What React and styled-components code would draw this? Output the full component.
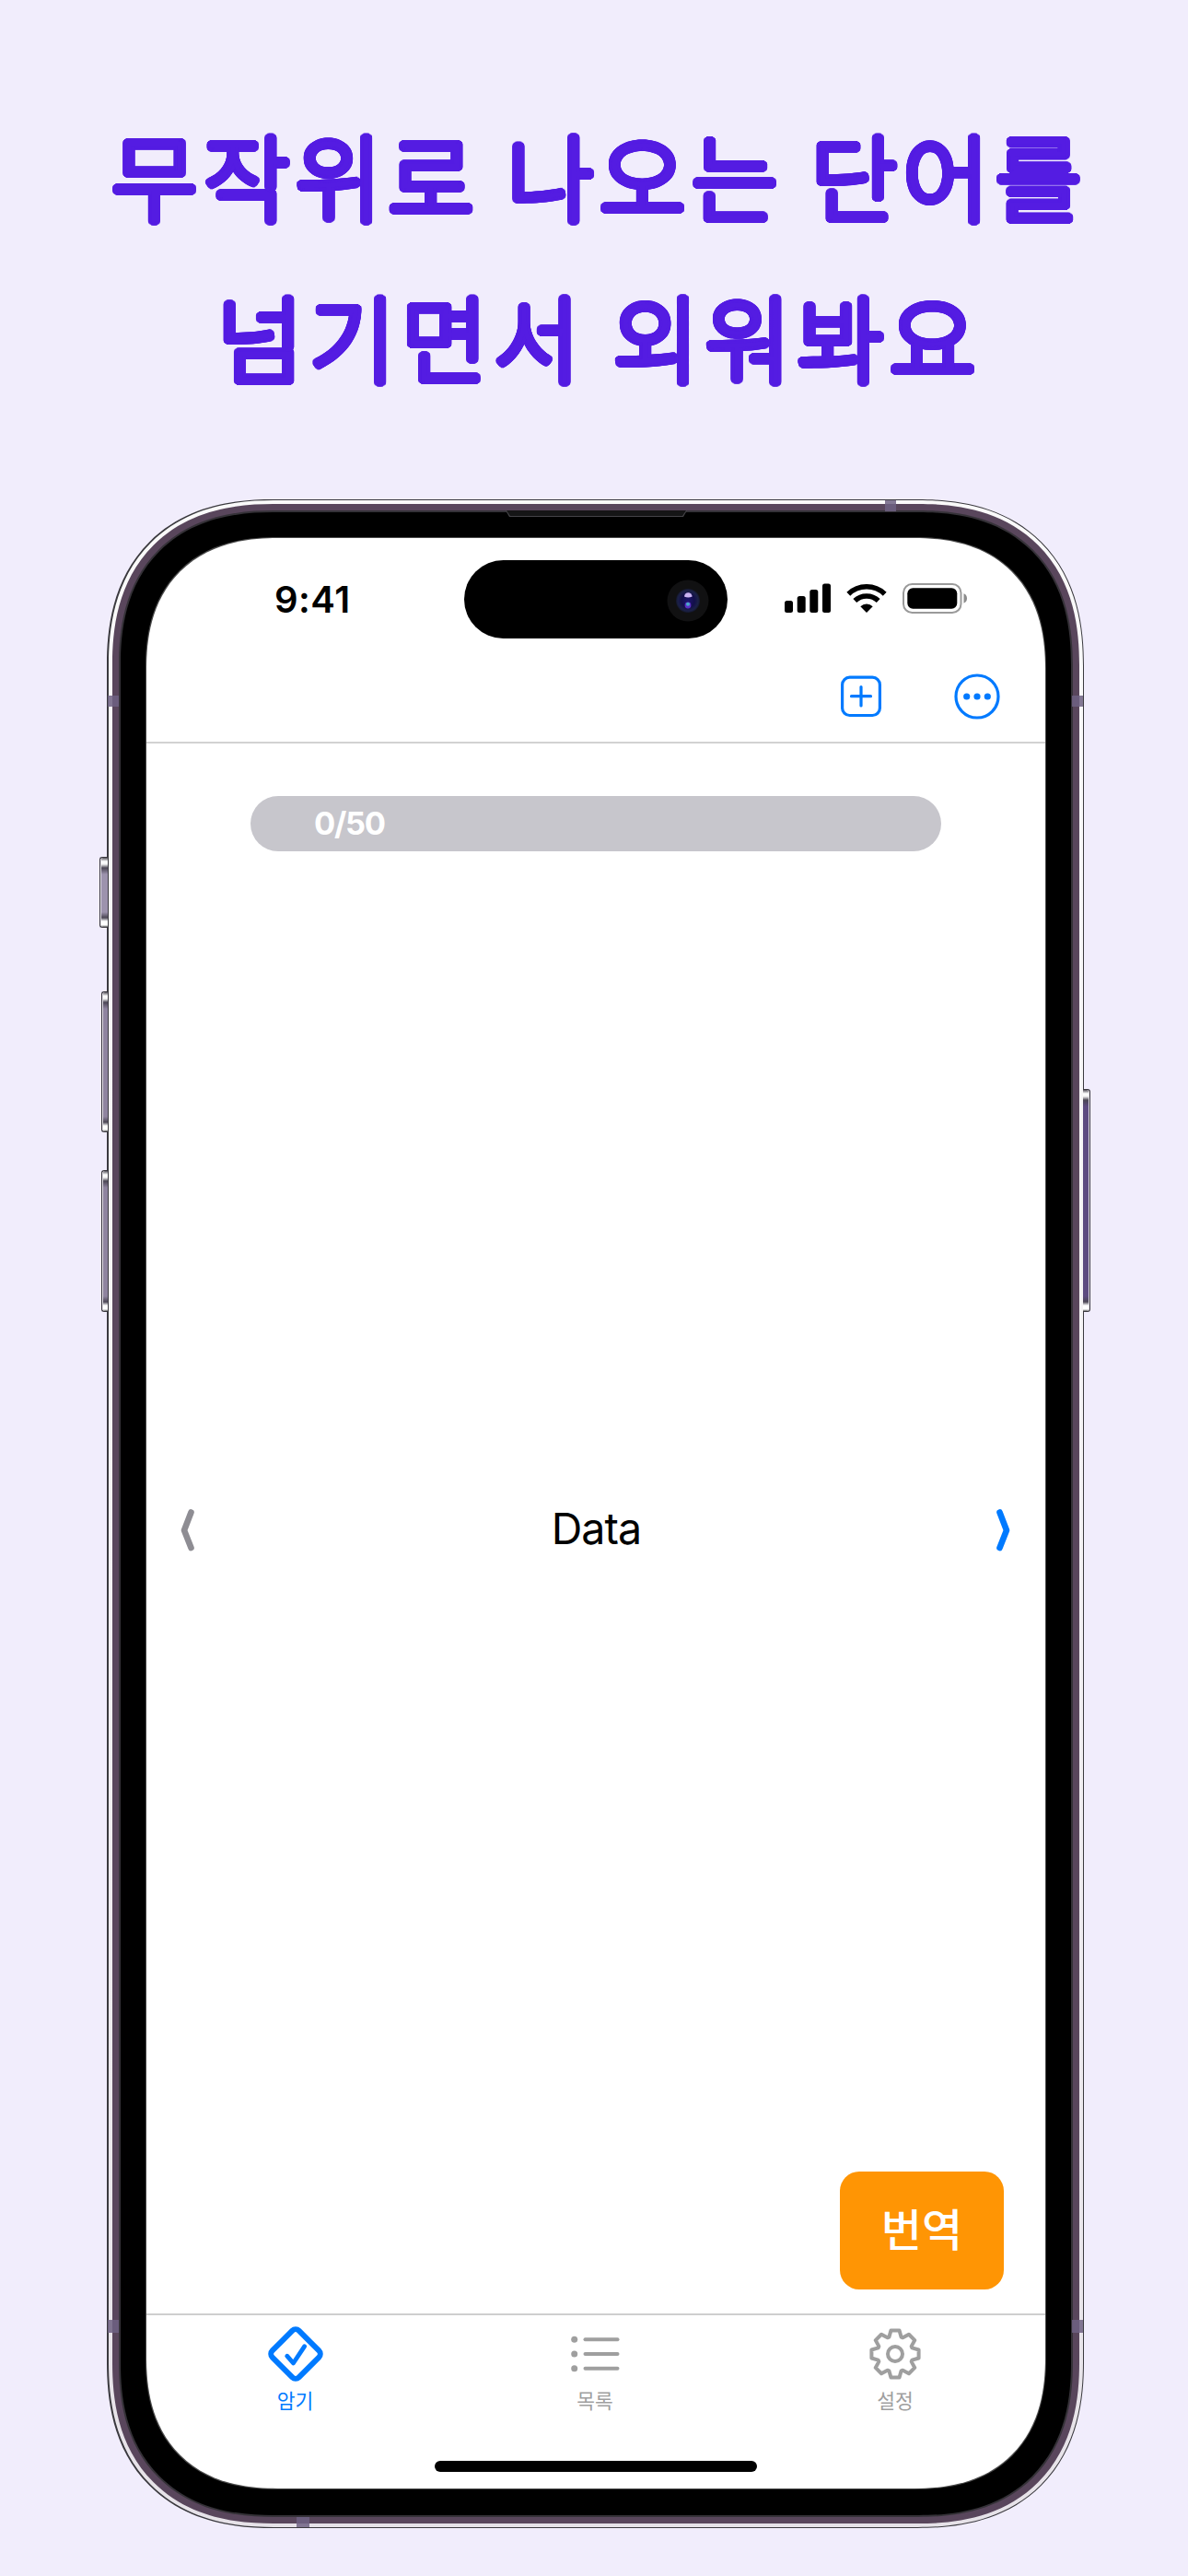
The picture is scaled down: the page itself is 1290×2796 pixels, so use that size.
import React from "react";
import styled, { createGlobalStyle, css } from "styled-components";

const BLUE = "#007aff";
const GRAY = "#8e8d93";
const TAB_GRAY = "#9f9f9f";
const VIOLET = "#541ce2";

const GlobalStyle = createGlobalStyle`
  * { box-sizing: border-box; }
  body { margin: 0; background: #f1edfc; }
  svg { display: block; flex: none; }
`;

const smooth = (r) => css`
  border-radius: ${r}px;
  @supports (corner-shape: superellipse(1.23)) {
    border-radius: ${r * 1.15}px;
    corner-shape: superellipse(1.23);
  }
`;

// Rings of hard shadows thicken the strokes and round off their ends.
const ring = (radius, steps) =>
  Array.from({ length: steps }, (_, i) => {
    const a = (i * 2 * Math.PI) / steps;
    return `${(radius * Math.cos(a)).toFixed(2)}px ${(radius * Math.sin(a)).toFixed(2)}px 0 ${VIOLET}`;
  }).join(", ");

const Page = styled.main`
  width: 1290px;
  height: 2796px;
  overflow: hidden;
  background: #f1edfc;
  font-family: Inter, "Noto Sans CJK KR", sans-serif;
`;

const Headline = styled.h1`
  margin: 0;
  padding: 101px 0 0 11px;
  height: 542px;
  text-align: center;
  font: 300 102.500px/175px "Noto Sans CJK KR", sans-serif;
  letter-spacing: 5.800px;
  word-spacing: 1px;
  color: ${VIOLET};
  text-shadow: ${ring(3.8, 28)}, ${ring(2, 12)};
`;

const Phone = styled.div`
  position: relative;
  width: 1061px;
  height: 2202px;
  margin-left: 116px;
`;

const Rim = styled.div`
  height: 100%;
  padding: 1px 1px 1px 2px;
  background: #3b3a3f;
  ${smooth(157)}
`;
const Highlight = styled.div`
  height: 100%;
  padding: 4px;
  background: linear-gradient(#fafafa, #f4f2f4 50%, #e6e2e8);
  ${smooth(156)}
`;
const Band = styled.div`
  height: 100%;
  padding: 7px;
  background: #59465c;
  ${smooth(152)}
`;
const Edge = styled.div`
  height: 100%;
  padding: 2px;
  background: #353238;
  ${smooth(146)}
`;
const Bezel = styled.div`
  height: 100%;
  padding: 28px 28px 29px;
  background: #000;
  ${smooth(144)}
`;
const Screen = styled.div`
  height: 100%;
  display: flex;
  flex-direction: column;
  background: #fff;
  overflow: hidden;
  box-shadow: 0 0 0 1px #4a4a4a;
  ${smooth(124)}
`;

const SideButton = styled.span`
  position: absolute;
  ${(p) => p.$side}: -${(p) => p.$out}px;
  top: ${(p) => p.$top}px;
  width: ${(p) => p.$out + 1}px;
  height: ${(p) => p.$h}px;
  border: 1px solid #3a383e;
  border-${(p) => (p.$side === "left" ? "right" : "left")}-width: 0;
  border-radius: ${(p) => (p.$side === "left" ? "3px 0 0 3px" : "0 3px 3px 0")};
  background: linear-gradient(
    #55515a, #fff 4px, #f4f4f4 7px, #4b4654 11px, ${(p) => p.$tone} 18px,
    ${(p) => p.$tone} calc(100% - 16px), #4b4654 calc(100% - 10px),
    #fff calc(100% - 6px), #fff calc(100% - 2px), #666);
  box-shadow: inset ${(p) => (p.$side === "left" ? 1 : -1)}px 0 0 #e4e1e8;
`;

const Antenna = styled.span`
  position: absolute;
  background: #6e6283d9;
  left: ${(p) => p.$x}px;
  top: ${(p) => p.$y}px;
  width: ${(p) => p.$w}px;
  height: ${(p) => p.$h}px;
`;

const Speaker = styled.span`
  position: absolute;
  left: 433px;
  top: 12px;
  width: 197px;
  height: 7px;
  background: #444347;
  clip-path: polygon(0 0, 100% 0, calc(100% - 4px) 100%, 4px 100%);
  &::after {
    content: "";
    display: block;
    height: 6px;
    background: #151516;
    clip-path: polygon(1px 0, calc(100% - 1px) 0, calc(100% - 5px) 100%, 5px 100%);
  }
`;

const StatusBar = styled.header`
  flex: none;
  height: 138px;
  padding: 24px 84px 0 139px;
  display: grid;
  grid-template-columns: 206px 286px 1fr;
`;
const Clock = styled.time`
  font-size: 40px;
  font-weight: 600;
  line-height: 85px;
  letter-spacing: 0.5px;
  color: #000;
`;
const Island = styled.div`
  height: 85px;
  border-radius: 43px;
  background: #000;
  display: flex;
  align-items: center;
  justify-content: flex-end;
  padding: 3px 20px 0 0;
`;
const StatusIcons = styled.div`
  display: flex;
  justify-content: flex-end;
  gap: 17px;
  padding-top: 25px;
`;

const Toolbar = styled.nav`
  flex: none;
  height: 85px;
  padding: 9px 49px 0 0;
  display: flex;
  align-items: flex-start;
  justify-content: flex-end;
  gap: 79px;
  border-bottom: 2px solid #d2d2d2;
`;

const Content = styled.section`
  flex: 1;
  display: flex;
  flex-direction: column;
  padding: 57px 38px 26px 37px;
`;
const Progress = styled.div`
  height: 60px;
  margin: 0 75px 0 76px;
  border-radius: 30px;
  background: #c7c6cc;
  padding-left: 69px;
  font-size: 34.5px;
  font-weight: 700;
  line-height: 60px;
  letter-spacing: -1.3px;
  color: #fff;
`;
const WordRow = styled.div`
  height: 60px;
  margin-top: 707px;
  display: flex;
  align-items: center;
  justify-content: space-between;
`;
const Word = styled.p`
  margin: 0;
  padding: 0 0 4px 2px;
  font-size: 46.5px;
  letter-spacing: -0.9px;
  line-height: 60px;
  color: #000;
`;
const TranslateButton = styled.button`
  width: 178px;
  height: 128px;
  margin: auto 7px 0 auto;
  padding: 0 0 8px;
  border: 0;
  border-radius: 21px;
  background: #ff9504;
  color: #fff;
  font: 500 48px/118px "Noto Sans CJK KR", sans-serif;
`;

const TabBar = styled.footer`
  flex: none;
  height: 190px;
  border-top: 2px solid #cfcfcf;
  display: grid;
  grid-template-columns: 323px 328px 1fr;
  grid-template-rows: 146px 42px;
  padding-right: 1px;
`;
const Tab = styled.div`
  display: flex;
  flex-direction: column;
  align-items: center;
  padding-top: 11px;
  color: ${(p) => (p.$active ? BLUE : TAB_GRAY)};
  font: 400 21.5px/30px "Noto Sans CJK KR", sans-serif;
  span { margin-top: 4px; }
`;
const HomeIndicator = styled.div`
  grid-column: 1 / -1;
  justify-self: center;
  width: 350px;
  height: 12px;
  margin: 12px 0 0 1px;
  border-radius: 6px;
  background: #000;
`;

const Camera = () => (
  <svg width="46" height="46" viewBox="-23 -23 46 46">
    <defs>
      <radialGradient id="lens">
        <stop offset="0" stopColor="#1d1470" />
        <stop offset="0.55" stopColor="#130f4a" />
        <stop offset="0.85" stopColor="#1b2147" />
        <stop offset="1" stopColor="#14172b" />
      </radialGradient>
    </defs>
    <circle r="22.5" fill="#111112" />
    <circle r="13" fill="url(#lens)" />
    <path d="M-4-4.5a4.3 4.3 0 0 1 8.6 0q-4.3 2-8.6 0z" fill="#c9b3f2" />
    <circle cy="5" r="3.4" fill="#5a2fc4" />
    <circle cy="3.8" r="2" fill="#49a9c8" />
  </svg>
);

const Signal = () => (
  <svg width="50" height="32" viewBox="0 0 50 32">
    <rect x="0" y="19" width="9" height="13" rx="2.5" />
    <rect x="13.7" y="14" width="9" height="18" rx="2.5" />
    <rect x="27.3" y="7" width="9" height="25" rx="2.5" />
    <rect x="41" y="0.5" width="9" height="31.5" rx="2.5" />
  </svg>
);

const Wifi = () => (
  <svg width="44" height="33" viewBox="0 0 44 33">
    <g fill="none" stroke="#000" strokeWidth="5.6">
      <path d="M2.3 11.7A28.5 28.5 0 0 1 41.7 11.7" />
      <path d="M9.3 19A18.5 18.5 0 0 1 34.7 19" />
    </g>
    <path d="M15.3 25.2a9.7 9.7 0 0 1 13.4 0L22 32z" />
  </svg>
);

const Battery = () => (
  <svg width="71" height="33" viewBox="0 0 71 33">
    <rect x="1" y="1" width="62.5" height="31" rx="9.5" fill="none" stroke="#9a9a9a" strokeWidth="2" />
    <rect x="5.3" y="5.3" width="54" height="22.4" rx="6" />
    <path d="M66.5 11.3a5.6 5.6 0 0 1 0 10.4z" fill="#8c8c8c" />
  </svg>
);

const AddIcon = () => (
  <svg width="44" height="49" viewBox="0 0 44 49" fill="none" stroke={BLUE} strokeWidth="3.2" strokeLinecap="round">
    <rect x="1.6" y="4.2" width="40.8" height="41.3" rx="8" />
    <path d="M22 14.5v20.5M11.500 24.7h21" />
  </svg>
);

const MoreIcon = () => (
  <svg width="50" height="50" viewBox="-25 -25 50 50" fill={BLUE}>
    <circle r="23" fill="none" stroke={BLUE} strokeWidth="3.2" />
    <circle cx="-11.3" r="3.6" />
    <circle r="3.6" />
    <circle cx="11.3" r="3.6" />
  </svg>
);

const Chevron = ({ color, d }) => (
  <svg width="15" height="46" viewBox="0 0 15 46" fill="none" stroke={color} strokeWidth="6.6" strokeLinecap="round" strokeLinejoin="round">
    <path d={d} />
  </svg>
);

const MemorizeIcon = () => (
  <svg width="62" height="62" viewBox="-31 -31 62 62" fill="none" stroke={BLUE} strokeLinecap="round" strokeLinejoin="round">
    <rect x="-20.4" y="-20.4" width="40.8" height="40.8" rx="5" strokeWidth="6" transform="rotate(45)" />
    <path d="M-9.3 2.2L-2.5 10L9.7-8.3" strokeWidth="4.8" />
  </svg>
);

const ListIcon = () => (
  <svg width="62" height="62" viewBox="-31 -31 62 62" fill={TAB_GRAY} stroke={TAB_GRAY}>
    {[-15.7, 0, 15.7].map((y) => (
      <g key={y}>
        <circle cx="-22.3" cy={y} r="3.5" stroke="none" />
        <path d={`M-10.5 ${y}H24.5`} strokeWidth="4" strokeLinecap="round" />
      </g>
    ))}
  </svg>
);

const gearTooth = [[-6.6, 18.4], [-4.5, 25.6], [4.5, 25.6], [6.6, 18.4]];
const gearPath =
  Array.from({ length: 8 }, (_, i) => {
    const a = (i * Math.PI) / 4;
    return gearTooth.map(([x, r], k) => {
      const px = x * Math.cos(a) + r * Math.sin(a);
      const py = x * Math.sin(a) - r * Math.cos(a);
      return `${i + k === 0 ? "M" : "L"}${px.toFixed(2)} ${py.toFixed(2)}`;
    }).join("");
  }).join("") + "z";

const GearIcon = () => (
  <svg width="62" height="62" viewBox="-31 -31 62 62" fill="none" stroke={TAB_GRAY} strokeWidth="4" strokeLinejoin="round">
    <path d={gearPath} />
    <circle r="8" />
  </svg>
);

export default function App() {
  return (
    <Page>
      <GlobalStyle />
      <Headline>
        무작위로 나오는 단어를
        <br />
        넘기면서 외워봐요
      </Headline>
      <Phone>
        <SideButton $side="left" $out={8} $top={388} $h={77} $tone="#9d93ad" />
        <SideButton $side="left" $out={6} $top={534} $h={153} $tone="#8f849f" />
        <SideButton $side="left" $out={6} $top={728} $h={154} $tone="#8f849f" />
        <SideButton $side="right" $out={7} $top={640} $h={242} $tone="#5d4b80" />
        <Rim>
          <Highlight>
            <Band>
              <Edge>
                <Bezel>
                  <Screen>
                    <StatusBar>
                      <Clock>9:41</Clock>
                      <Island><Camera /></Island>
                      <StatusIcons>
                        <Signal />
                        <Wifi />
                        <Battery />
                      </StatusIcons>
                    </StatusBar>
                    <Toolbar>
                      <AddIcon />
                      <MoreIcon />
                    </Toolbar>
                    <Content>
                      <Progress>0/50</Progress>
                      <WordRow>
                        <Chevron color={GRAY} d="M11.5 3.5L4 23L11.5 42" />
                        <Word>Data</Word>
                        <Chevron color={BLUE} d="M3.5 3.5L11 23L3.5 42" />
                      </WordRow>
                      <TranslateButton>번역</TranslateButton>
                    </Content>
                    <TabBar>
                      <Tab $active><MemorizeIcon /><span>암기</span></Tab>
                      <Tab><ListIcon /><span>목록</span></Tab>
                      <Tab><GearIcon /><span>설정</span></Tab>
                      <HomeIndicator />
                    </TabBar>
                  </Screen>
                </Bezel>
              </Edge>
            </Band>
          </Highlight>
        </Rim>
        <Speaker />
        <Antenna $x={1} $y={213} $w={12} $h={12} />
        <Antenna $x={1048} $y={213} $w={12} $h={12} />
        <Antenna $x={845} $y={1} $w={12} $h={12} />
        <Antenna $x={1} $y={1976} $w={12} $h={14} />
        <Antenna $x={1048} $y={1976} $w={12} $h={14} />
        <Antenna $x={206} $y={2190} $w={14} $h={11} />
      </Phone>
    </Page>
  );
}
